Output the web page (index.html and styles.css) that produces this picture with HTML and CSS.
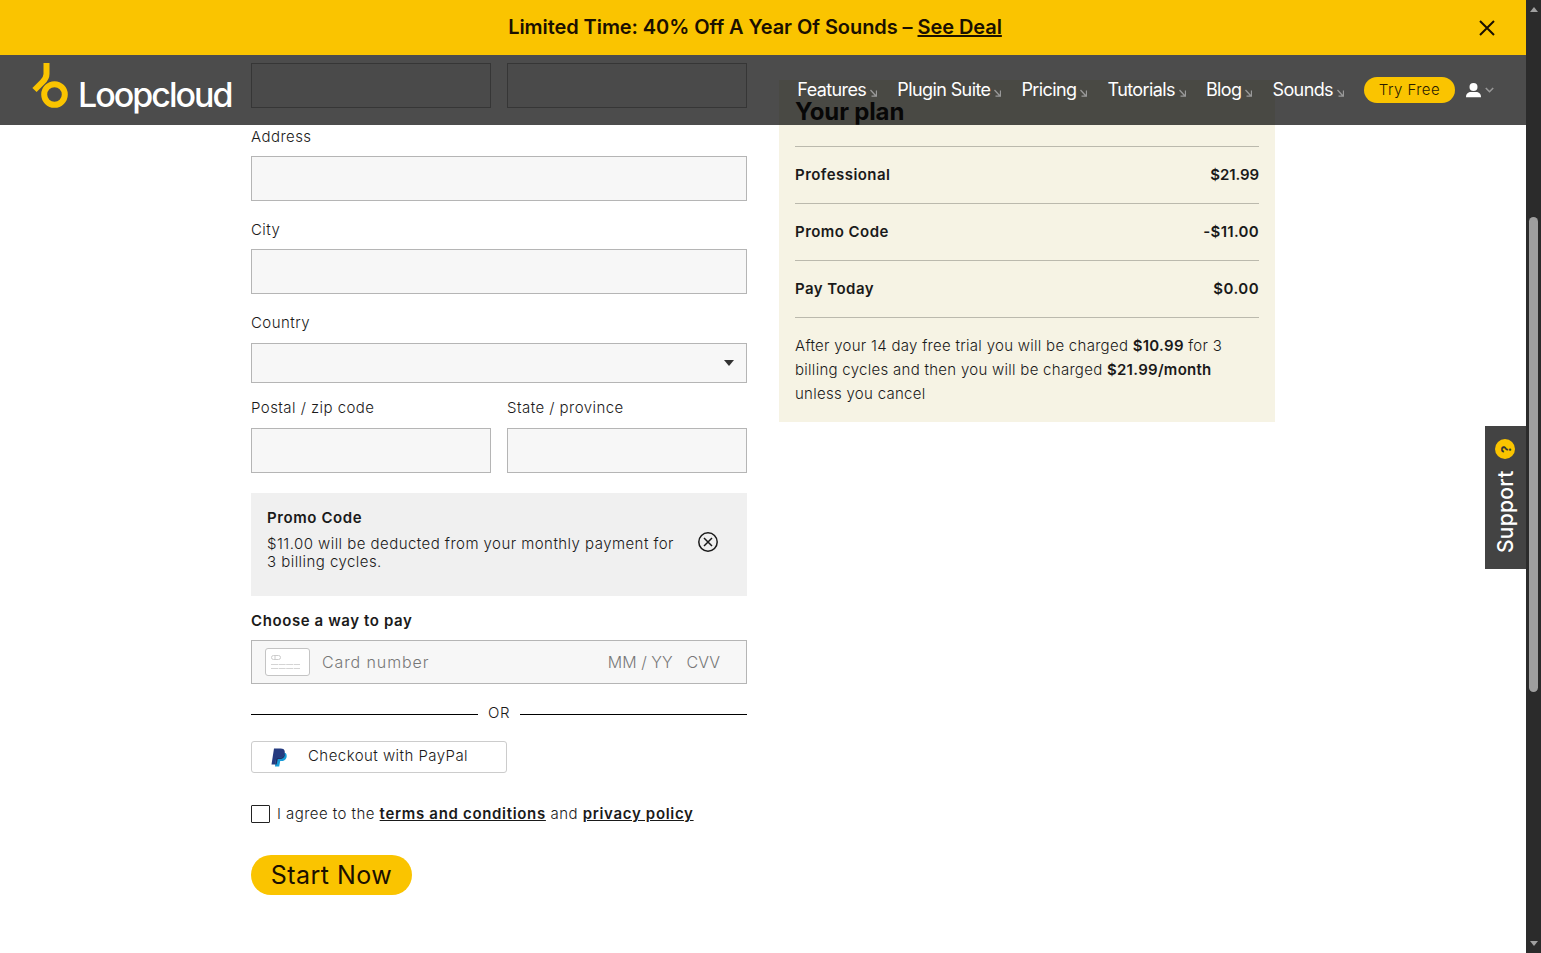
FILE: index.html
```html
<!DOCTYPE html>
<html lang="en">
  <head>
    <meta charset="UTF-8" />
    <meta name="viewport" content="width=device-width, initial-scale=1.0" />
    <title>Loopcloud - Checkout</title>
    <link rel="stylesheet" href="styles.css">
  </head>
  <body>
    <div class="page">
      <div class="promo-bar">
        <p class="promo-text">Limited Time: 40% Off A Year Of Sounds – <a href="#">See Deal</a></p>
        <button class="promo-close" aria-label="Close">
          <svg width="16" height="16" viewBox="0 0 16 16"><path d="M1 1l14 14M15 1L1 15" stroke="#1a1000" stroke-width="2" fill="none" /></svg>
        </button>
      </div>

      <header class="header">
        <a class="logo" href="#">
          <svg width="38" height="46" viewBox="0 0 38 46" fill="none" stroke="#fac400" stroke-width="6">
            <path d="M14.500 0v11c0 3.500-1.500 5.500-4 8L2.500 27" />
            <circle cx="22.500" cy="31.500" r="10.300" />
          </svg>
          <span class="logo-text">Loopcloud</span>
        </a>
        <nav class="nav">
          <a href="#">Features<svg width="7" height="8" viewBox="0 0 7 8"><path d="M0.500 1l5.500 6M1.500 7.200h5V1.500" /></svg></a>
          <a href="#">Plugin Suite<svg width="7" height="8" viewBox="0 0 7 8"><path d="M0.500 1l5.500 6M1.500 7.200h5V1.500" /></svg></a>
          <a href="#">Pricing<svg width="7" height="8" viewBox="0 0 7 8"><path d="M0.500 1l5.500 6M1.500 7.200h5V1.500" /></svg></a>
          <a href="#">Tutorials<svg width="7" height="8" viewBox="0 0 7 8"><path d="M0.500 1l5.500 6M1.500 7.200h5V1.500" /></svg></a>
          <a href="#">Blog<svg width="7" height="8" viewBox="0 0 7 8"><path d="M0.500 1l5.500 6M1.500 7.200h5V1.500" /></svg></a>
          <a href="#">Sounds<svg width="7" height="8" viewBox="0 0 7 8"><path d="M0.500 1l5.500 6M1.500 7.200h5V1.500" /></svg></a>
        </nav>
        <a class="try-free" href="#">Try Free</a>
        <a class="account" href="#" aria-label="Account">
          <svg width="15" height="16" viewBox="0 0 15 16" fill="#fff"><circle cx="7.500" cy="5" r="4" /><path d="M0 15.300c0-3.800 2.300-5.300 5-5.300h5c2.700 0 5 1.500 5 5.300z" /></svg>
          <svg width="9" height="6" viewBox="0 0 9 6"><path d="M0.800 1l3.700 3.700L8.200 1" stroke="#999" stroke-width="1.600" fill="none" /></svg>
        </a>
      </header>

      <main class="checkout">
        <form class="form">
          <div class="row">
            <input class="input" type="text" />
            <input class="input" type="text" />
          </div>
          <div class="field">
            <label for="address">Address</label>
            <input class="input" type="text" id="address" />
          </div>
          <div class="field">
            <label for="city">City</label>
            <input class="input" type="text" id="city" />
          </div>
          <div class="field country">
            <label for="country">Country</label>
            <div class="select" id="country">
              <svg width="10" height="6" viewBox="0 0 10 6"><path d="M0 0h10L5 6z" fill="#333" /></svg>
            </div>
          </div>
          <div class="row last">
            <div class="field">
              <label for="postal">Postal / zip code</label>
              <input class="input" type="text" id="postal" />
            </div>
            <div class="field">
              <label for="state">State / province</label>
              <input class="input" type="text" id="state" />
            </div>
          </div>

          <div class="promo-box">
            <div class="promo-info">
              <h3>Promo Code</h3>
              <p>$11.00 will be deducted from your monthly payment for<br />3 billing cycles.</p>
            </div>
            <svg width="20" height="20" viewBox="0 0 20 20" fill="none" stroke="#1a1a1a" stroke-width="1.500">
              <circle cx="10" cy="10" r="9.200" />
              <path d="M6 6l8 8M14 6l-8 8" />
            </svg>
          </div>

          <h3 class="pay-title">Choose a way to pay</h3>
          <div class="card-field">
            <svg width="45" height="28" viewBox="0 0 45 28" fill="none">
              <rect x="0.500" y="0.500" width="44" height="27" rx="2.500" fill="#fff" stroke="#c4c4c4" />
              <rect x="6.500" y="7.500" width="9" height="4" rx="2" stroke="#ccc" />
              <path d="M10 7.500v4" stroke="#ccc" />
              <path d="M6 16.500h29M6 20.500h29" stroke="#d4d4d4" stroke-dasharray="7 0.600" />
            </svg>
            <span class="card-number">Card number</span>
            <span class="card-date">MM / YY</span>
            <span class="card-cvv">CVV</span>
          </div>

          <div class="or"><span>OR</span></div>

          <button class="paypal" type="button">
            <svg width="16" height="19" viewBox="0 0 16 19">
              <path d="M5 5h9.500c1.300 1.200 1.400 3 .9 4.700-.8 2.600-2.700 3.300-5.200 3.300H9.200L8.200 18.500H4z" fill="#179bd7" />
              <path d="M3 0.500h6.500c3.200 0 4.800 1.500 4.200 4.700-.7 3.400-3 4.800-6.200 4.800H5.300L4.200 16.500H0.500z" fill="#253b80" />
              <path d="M5.300 10h2.200c3.200 0 5.500-1.400 6.200-4.800C14.500 8 12.500 11 9 11H6.800l-1.200 5.500H4.200z" fill="#222d65" />
            </svg>
            <span>Checkout with PayPal</span>
          </button>

          <div class="terms">
            <span class="checkbox"></span>
            <p>I agree to the <a href="#">terms and conditions</a> and <a href="#">privacy policy</a></p>
          </div>

          <button class="start" type="button">Start Now</button>
        </form>

        <aside class="plan">
          <h2>Your plan</h2>
          <div class="plan-row"><span>Professional</span><span class="price">$21.99</span></div>
          <div class="plan-row"><span>Promo Code</span><span class="price discount">-$11.00</span></div>
          <div class="plan-row"><span>Pay Today</span><span class="price total">$0.00</span></div>
          <p class="plan-note">After your 14 day free trial you will be charged <b>$10.99</b> for 3<br />billing cycles and then you will be charged <b>$21.99/month</b><br />unless you cancel</p>
        </aside>
      </main>

      <div class="support"><span>Support</span><i>?</i></div>
    </div>

    <div class="scrollbar">
      <svg width="8" height="5" viewBox="0 0 8 5"><path d="M4 0l4 5H0z" fill="#a0a0a0" /></svg>
      <div class="thumb"></div>
      <svg width="8" height="5" viewBox="0 0 8 5"><path d="M0 0h8L4 5z" fill="#a0a0a0" /></svg>
    </div>
  </body>
</html>
```
FILE: styles.css
```css
* {
  box-sizing: border-box;
}
body {
  margin: 0;
  display: flex;
  height: 953px;
  overflow: hidden;
  font-family: Inter, "Liberation Sans", sans-serif;
  font-size: 15px;
  line-height: 24px;
  font-weight: 300;
  letter-spacing: 0.45px;
  color: #1a1a1a;
  background: #fff;
}
a {
  color: inherit;
}
p,
h2,
h3 {
  margin: 0;
}
button {
  font-family: inherit;
  color: inherit;
  letter-spacing: inherit;
  border: none;
  padding: 0;
  cursor: pointer;
}
svg {
  display: block;
  flex: none;
}
.page {
  position: relative;
  flex: 1;
}

/* promo bar */
.promo-bar {
  display: flex;
  align-items: center;
  height: 55px;
  padding: 0 31px;
  background: #fac400;
}
.promo-text {
  flex: 1;
  padding-bottom: 1px;
  text-align: center;
  font-size: 20px;
  font-weight: 600;
  letter-spacing: -0.07px;
  color: #1a1000;
}
.promo-close {
  background: none;
}

/* header lies over the scrolled form */
.header {
  position: absolute;
  top: 55px;
  left: 0;
  right: 0;
  z-index: 2;
  height: 70px;
  display: flex;
  align-items: center;
  padding: 0 32px;
  background: rgba(0, 0, 0, 0.7);
  color: #fff;
}
.header a {
  text-decoration: none;
}
.logo {
  display: flex;
  align-items: center;
  gap: 8px;
  margin-right: auto;
}
.logo svg {
  margin-bottom: 9px;
}
.logo-text {
  padding-top: 9px;
  font-size: 34px;
  font-weight: 500;
  letter-spacing: -2px;
}
.nav {
  display: flex;
  font-size: 18px;
  font-weight: 400;
  letter-spacing: -0.6px;
}
.nav a {
  display: flex;
  align-items: center;
  margin-right: 20px;
}
.nav svg {
  margin: 6px 0 0 4px;
  fill: none;
  stroke: #999;
  stroke-width: 1.3;
}
.try-free {
  width: 91px;
  height: 26px;
  border-radius: 13px;
  background: #fac400;
  color: #2a1c00;
  text-align: center;
  line-height: 26px;
}
.account {
  display: flex;
  align-items: center;
  gap: 4px;
  margin-left: 11px;
}

/* form */
.checkout {
  display: grid;
  grid-template-columns: 496px 496px;
  gap: 32px;
  align-items: start;
  padding: 8px 0 0 251px;
}
.row {
  display: grid;
  grid-template-columns: 1fr 1fr;
  gap: 16px;
  margin-bottom: 17px;
}
.row .field {
  margin-bottom: 0;
}
.row.last {
  margin-bottom: 20px;
}
.row.last label {
  margin-bottom: 8px;
}
.field {
  margin-bottom: 17px;
}
label {
  display: block;
  margin-bottom: 7px;
}
.input,
.select,
.card-field {
  display: block;
  width: 100%;
  height: 45px;
  border: 1px solid #b5b5b5;
  border-radius: 0;
  background: #f7f7f7;
}
.country {
  margin-bottom: 13px;
}
.country label {
  margin-bottom: 8px;
}
.select {
  display: flex;
  align-items: center;
  justify-content: flex-end;
  height: 40px;
  padding-right: 12px;
}
.promo-box {
  display: flex;
  justify-content: space-between;
  height: 103px;
  padding: 13px 29px 0 16px;
  background: #f0f0f0;
}
.promo-box svg {
  margin-top: 26px;
}
h3 {
  font-size: 15px;
  font-weight: 600;
  letter-spacing: 0.6px;
}
.promo-box p {
  margin-top: 5px;
  line-height: 18px;
  white-space: nowrap;
}
.pay-title {
  margin: 13px 0 7px;
}
.card-field {
  display: flex;
  align-items: center;
  height: 44px;
  padding: 0 26px 0 13px;
  font-size: 16px;
  letter-spacing: 0;
  color: #777;
}
.card-number {
  margin: 0 auto 0 12px;
  letter-spacing: 0.9px;
}
.card-date {
  margin-right: 14px;
}
.or {
  display: flex;
  align-items: center;
  gap: 10px;
  height: 24px;
  margin: 17px 0 16px;
}
.or::before,
.or::after {
  content: "";
  flex: 1;
  height: 1px;
  margin-top: 3px;
  background: #000;
}
.paypal {
  display: flex;
  align-items: center;
  width: 256px;
  height: 32px;
  padding: 0 0 2px 19px;
  border: 1px solid #ccc;
  border-radius: 3px;
  background: #fff;
  font-size: 15px;
  font-weight: 300;
}
.paypal svg {
  margin: 2px 21px 0 0;
}
.paypal span {
  margin-bottom: 1px;
}
.terms {
  display: flex;
  align-items: center;
  margin-top: 29px;
}
.terms a {
  font-weight: 600;
  letter-spacing: 0.68px;
}
.checkbox {
  width: 19px;
  height: 18px;
  margin-right: 7px;
  border: 1px solid #222;
  border-radius: 1px;
}
.start {
  width: 161px;
  height: 40px;
  margin-top: 29px;
  padding-bottom: 1px;
  border-radius: 20px;
  background: #fac400;
  color: #1a1000;
  font-size: 25px;
  font-weight: 400;
}

/* plan */
.plan {
  height: 342px;
  margin-top: 17px;
  padding: 16px 16px 0;
  background: #f6f3e4;
}
.plan h2 {
  height: 51px;
  font-size: 24px;
  line-height: 32px;
  font-weight: 700;
  letter-spacing: -0.15px;
  border-bottom: 1px solid #bbb9ad;
}
.plan-row {
  display: flex;
  justify-content: space-between;
  height: 57px;
  line-height: 56px;
  font-weight: 600;
  border-bottom: 1px solid #bbb9ad;
}
.price {
  letter-spacing: -0.1px;
}
.discount {
  letter-spacing: 0.3px;
}
.total {
  letter-spacing: 0.45px;
}
.plan-note {
  margin-top: 16px;
  white-space: nowrap;
  letter-spacing: 0.28px;
}
.plan-note b {
  font-weight: 600;
}

/* support tab */
.support {
  position: absolute;
  right: 0;
  top: 426px;
  display: flex;
  align-items: center;
  gap: 11px;
  width: 41px;
  height: 143px;
  padding-top: 16px;
  writing-mode: vertical-rl;
  transform: rotate(180deg);
  background: #434343;
  color: #fff;
  font-size: 21px;
  font-weight: 500;
  letter-spacing: 0.3px;
}
.support i {
  width: 20px;
  height: 20px;
  border-radius: 50%;
  background: #fac400;
  color: #333;
  font-size: 13px;
  font-style: normal;
  font-weight: 700;
  line-height: 20px;
  text-align: center;
}

/* window scrollbar */
.scrollbar {
  width: 15px;
  display: flex;
  flex-direction: column;
  align-items: center;
  padding: 7px 0;
  background: #2b2b2b;
}
.thumb {
  width: 9px;
  height: 475px;
  margin: 205px 0 auto;
  border-radius: 5px;
  background: #9f9f9f;
}
```
